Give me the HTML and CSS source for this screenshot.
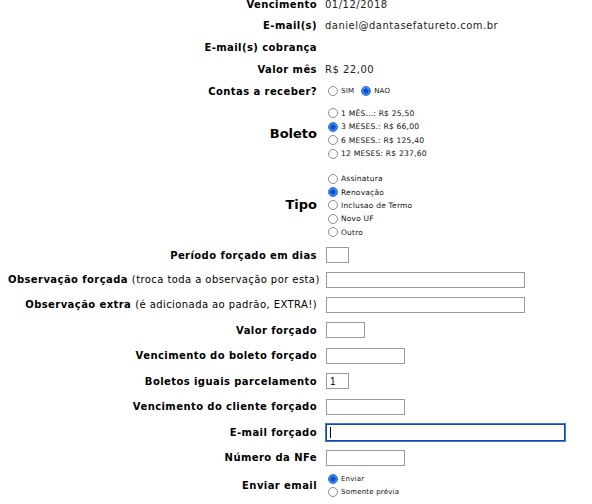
FILE: index.html
```
<!DOCTYPE html>
<html lang="pt-BR">
<head>
<meta charset="utf-8">
<title>Cobrança</title>
<link rel="stylesheet" href="styles.css">
</head>
<body>
<div class="form">
  <div class="row h22"><div class="lbl">Vencimento</div><div class="val">01/12/2018</div></div>
  <div class="row h21"><div class="lbl">E-mail(s)</div><div class="val">daniel@dantasefatureto.com.br</div></div>
  <div class="row h22"><div class="lbl">E-mail(s) cobrança</div><div class="val"></div></div>
  <div class="row h22"><div class="lbl">Valor mês</div><div class="val">R$ 22,00</div></div>
  <div class="row h22"><div class="lbl">Contas a receber?</div>
    <div class="val inline">
      <label class="opt"><input type="radio" name="cr"><span>SIM</span></label>
      <label class="opt"><input type="radio" name="cr" checked><span>NAO</span></label>
    </div>
  </div>
  <div class="row h63"><div class="lbl big">Boleto</div>
    <div class="val opts">
      <label class="opt"><input type="radio" name="bo"><span>1 MÊS...: R$ 25,50</span></label>
      <label class="opt"><input type="radio" name="bo" checked><span>3 MESES.: R$ 66,00</span></label>
      <label class="opt"><input type="radio" name="bo"><span>6 MESES.: R$ 125,40</span></label>
      <label class="opt"><input type="radio" name="bo"><span>12 MESES: R$ 237,60</span></label>
    </div>
  </div>
  <div class="row h78"><div class="lbl big">Tipo</div>
    <div class="val opts small tipo">
      <label class="opt"><input type="radio" name="ti"><span>Assinatura</span></label>
      <label class="opt"><input type="radio" name="ti" checked><span>Renovação</span></label>
      <label class="opt"><input type="radio" name="ti"><span>Inclusao de Termo</span></label>
      <label class="opt"><input type="radio" name="ti"><span>Novo UF</span></label>
      <label class="opt"><input type="radio" name="ti"><span>Outro</span></label>
    </div>
  </div>
  <div class="row h24"><div class="lbl">Período forçado em dias</div><div class="val"><input class="txt w23" type="text"></div></div>
  <div class="row h25"><div class="lbl">Observação forçada <span class="note">(troca toda a observação por esta)</span></div><div class="val"><input class="txt w198" type="text"></div></div>
  <div class="row h25"><div class="lbl">Observação extra <span class="note">(é adicionada ao padrão, EXTRA!)</span></div><div class="val"><input class="txt w198" type="text"></div></div>
  <div class="row h26"><div class="lbl">Valor forçado</div><div class="val"><input class="txt w38" type="text"></div></div>
  <div class="row h25"><div class="lbl">Vencimento do boleto forçado</div><div class="val"><input class="txt w78" type="text"></div></div>
  <div class="row h26"><div class="lbl">Boletos iguais parcelamento</div><div class="val"><input class="txt w23" type="text" value="1"></div></div>
  <div class="row h25"><div class="lbl">Vencimento do cliente forçado</div><div class="val"><input class="txt w78" type="text"></div></div>
  <div class="row h26"><div class="lbl">E-mail forçado</div><div class="val"><span class="focus-wrap"><input class="txt w239 focused" type="text"><span class="caret"></span></span></div></div>
  <div class="row h25"><div class="lbl">Número da NFe</div><div class="val"><input class="txt w78" type="text"></div></div>
  <div class="row h31"><div class="lbl">Enviar email</div>
    <div class="val opts small">
      <label class="opt"><input type="radio" name="en" checked><span>Enviar</span></label>
      <label class="opt"><input type="radio" name="en"><span>Somente prévia</span></label>
    </div>
  </div>
  <div class="buttons">
    <span class="btn b1"></span>
    <span class="btn b2"></span>
  </div>
</div>
</body>
</html>
```
FILE: styles.css
```
html, body {
  background: #fff;
}
body {
  margin: 0 8px;
  font-family: "DejaVu Sans", Verdana, sans-serif;
  font-size: 10px;
  color: #000;
  overflow: hidden;
}
.form {
  margin-top: -7px;
}
.row {
  display: grid;
  grid-template-columns: 309px 1fr;
  column-gap: 8px;
  align-items: center;
}
.h21 { height: 21px; }
.h22 { height: 22px; }
.h24 { height: 24px; }
.h25 { height: 25px; }
.h26 { height: 26px; }
.h31 { height: 31px; }
.h63 { height: 63px; }
.h78 { height: 78px; }

.lbl {
  text-align: right;
  font-weight: bold;
  white-space: nowrap;
  letter-spacing: 0.42px;
}
.lbl .note {
  font-weight: normal;
}
.lbl.big {
  font-size: 13px;
  letter-spacing: 0;
}
.val {
  color: #222;
  white-space: nowrap;
  letter-spacing: 0.5px;
}

.opts {
  display: flex;
  flex-direction: column;
  letter-spacing: 0.2px;
}
.inline {
  display: flex;
  align-items: center;
  letter-spacing: 0.2px;
}
.opt {
  display: flex;
  align-items: center;
  height: 13.5px;
  font-size: 7.6px;
  color: #111;
}
.inline .opt {
  font-size: 7px;
}
.inline .opt + .opt input {
  margin-left: 7px;
}
.small .opt {
  font-size: 7px;
  height: 13.4px;
}
.tipo {
  margin-top: 3px;
}
.tipo .opt {
  font-size: 7.5px;
}
.opt input {
  -webkit-appearance: none;
  appearance: none;
  box-sizing: border-box;
  width: 10px;
  height: 10px;
  margin: 0 3px 0 3px;
  border: 1px solid #8d8d8d;
  border-radius: 50%;
  background: #fff;
}
.opt input:checked {
  border-color: #2a6fd8;
  background: radial-gradient(circle, #0a50c8 0 2.3px, #3b86ee 2.8px);
}

.txt {
  box-sizing: border-box;
  height: 16px;
  margin: 0 0 0 1px;
  padding: 0 3px;
  border: 1px solid #9a9a9a;
  border-radius: 0;
  font-family: "Liberation Sans", Arial, sans-serif;
  font-size: 10px;
  color: #000;
  background: #fff;
  outline: none;
}
.w23 { width: 23px; }
.w38 { width: 39px; }
.w78 { width: 79px; }
.w198 { width: 199px; }
.w239 { width: 239px; height: 17px; }
.focus-wrap {
  position: relative;
  display: inline-block;
}
.txt.focused {
  border: 1px solid #1747a6;
  box-shadow: 0 0 0 1px #3f78d4;
}
.caret {
  position: absolute;
  left: 5px;
  top: 3px;
  width: 1px;
  height: 11px;
  background: #000;
}

.buttons {
  display: flex;
  gap: 11px;
  margin: 3px 0 0 32px;
}
.btn {
  display: block;
  height: 22px;
  box-sizing: border-box;
  border: 1px solid #d6d6d6;
  background: #f6f6f6;
}
.b1 { width: 33px; }
.b2 { width: 20px; }
```
